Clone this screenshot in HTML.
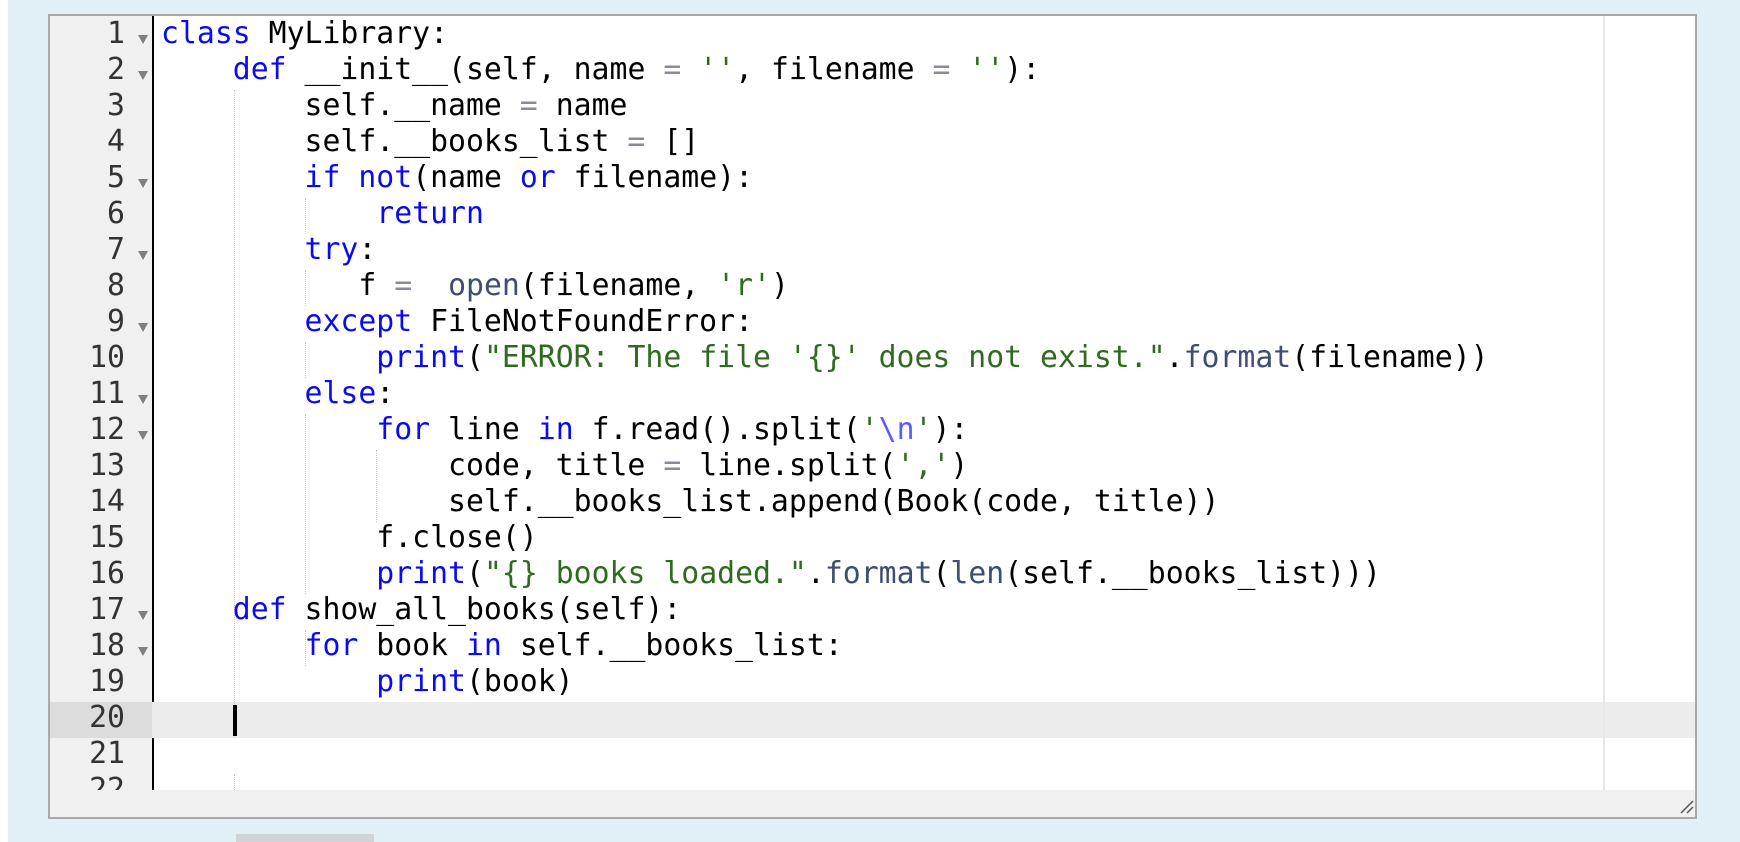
<!DOCTYPE html>
<html><head><meta charset="utf-8"><style>
html,body{margin:0;padding:0;}
body{width:1740px;height:842px;background:#e1eff7;position:relative;overflow:hidden;font-family:"DejaVu Sans Mono","Liberation Mono",monospace;}
.strip{position:absolute;left:0;top:0;width:8px;height:842px;background:#fff;}
.ed{position:absolute;left:48px;top:14px;width:1645px;height:801px;border:2px solid #a9a9a9;background:#fff;overflow:hidden;}
.gut{position:absolute;left:0;top:0;width:102px;height:774px;background:#f0f0f0;border-right:2px solid #000;}
.bot{position:absolute;left:0;top:774px;width:100%;height:40px;background:#f0f0f0;}
.pm{position:absolute;left:1553px;top:0;width:2px;height:774px;background:#e8e8e8;}
.hl{position:absolute;left:0;top:686px;width:100%;height:36px;background:#ececec;}
.hlg{position:absolute;left:0;top:686px;width:102px;height:36px;background:#dcdcdc;}
.ln{position:absolute;left:0;width:75px;text-align:right;font-size:29.8px;line-height:36px;color:#333;margin-top:-2px;}
.ar{position:absolute;left:88px;width:0;height:0;border-left:5px solid transparent;border-right:5px solid transparent;border-top:9px solid #808080;}
.cl{position:absolute;left:111px;white-space:pre;font-size:29.8px;line-height:36px;color:#000;margin-top:-2px;}
.k{color:#0b0bf0}.s{color:#2f6b1f}.b{color:#3e4d73}.o{color:#8a8a9a}.e{color:#5a5aff}
.g{position:absolute;width:0;border-left:1px dotted #c8c8c8;}
.cur{position:absolute;left:183px;top:689px;width:4px;height:31px;background:#000;}
.blk{position:absolute;left:236px;top:834px;width:138px;height:8px;background:#cfd4d8;}
</style></head><body>
<div class="strip"></div>
<div class="ed">
<div class="gut"></div>
<div class="hl"></div><div class="hlg"></div>
<div class="pm"></div>
<div class="g" style="left:184px;top:74px;height:648px"></div>
<div class="g" style="left:184px;top:758px;height:20px"></div>
<div class="g" style="left:255px;top:182px;height:36px"></div>
<div class="g" style="left:255px;top:254px;height:36px"></div>
<div class="g" style="left:255px;top:326px;height:36px"></div>
<div class="g" style="left:255px;top:398px;height:180px"></div>
<div class="g" style="left:255px;top:614px;height:36px"></div>
<div class="g" style="left:326px;top:434px;height:72px"></div>
<div class="ln" style="top:2px">1</div><div class="ar" style="top:19px"></div>
<div class="ln" style="top:38px">2</div><div class="ar" style="top:55px"></div>
<div class="ln" style="top:74px">3</div>
<div class="ln" style="top:110px">4</div>
<div class="ln" style="top:146px">5</div><div class="ar" style="top:163px"></div>
<div class="ln" style="top:182px">6</div>
<div class="ln" style="top:218px">7</div><div class="ar" style="top:235px"></div>
<div class="ln" style="top:254px">8</div>
<div class="ln" style="top:290px">9</div><div class="ar" style="top:307px"></div>
<div class="ln" style="top:326px">10</div>
<div class="ln" style="top:362px">11</div><div class="ar" style="top:379px"></div>
<div class="ln" style="top:398px">12</div><div class="ar" style="top:415px"></div>
<div class="ln" style="top:434px">13</div>
<div class="ln" style="top:470px">14</div>
<div class="ln" style="top:506px">15</div>
<div class="ln" style="top:542px">16</div>
<div class="ln" style="top:578px">17</div><div class="ar" style="top:595px"></div>
<div class="ln" style="top:614px">18</div><div class="ar" style="top:631px"></div>
<div class="ln" style="top:650px">19</div>
<div class="ln" style="top:686px">20</div>
<div class="ln" style="top:722px">21</div>
<div class="ln" style="top:758px">22</div>
<div class="cl" style="top:2px"><span class="k">class</span> MyLibrary:</div>
<div class="cl" style="top:38px">    <span class="k">def</span> __init__(self, name <span class="o">=</span> <span class="s">''</span>, filename <span class="o">=</span> <span class="s">''</span>):</div>
<div class="cl" style="top:74px">        self.__name <span class="o">=</span> name</div>
<div class="cl" style="top:110px">        self.__books_list <span class="o">=</span> []</div>
<div class="cl" style="top:146px">        <span class="k">if</span> <span class="k">not</span>(name <span class="k">or</span> filename):</div>
<div class="cl" style="top:182px">            <span class="k">return</span></div>
<div class="cl" style="top:218px">        <span class="k">try</span>:</div>
<div class="cl" style="top:254px">           f <span class="o">=</span>  <span class="b">open</span>(filename, <span class="s">'r'</span>)</div>
<div class="cl" style="top:290px">        <span class="k">except</span> FileNotFoundError:</div>
<div class="cl" style="top:326px">            <span class="k">print</span>(<span class="s">"ERROR: The file '{}' does not exist."</span>.<span class="b">format</span>(filename))</div>
<div class="cl" style="top:362px">        <span class="k">else</span>:</div>
<div class="cl" style="top:398px">            <span class="k">for</span> line <span class="k">in</span> f.read().split(<span class="s">'</span><span class="e">\n</span><span class="s">'</span>):</div>
<div class="cl" style="top:434px">                code, title <span class="o">=</span> line.split(<span class="s">','</span>)</div>
<div class="cl" style="top:470px">                self.__books_list.append(Book(code, title))</div>
<div class="cl" style="top:506px">            f.close()</div>
<div class="cl" style="top:542px">            <span class="k">print</span>(<span class="s">"{} books loaded."</span>.<span class="b">format</span>(<span class="b">len</span>(self.__books_list)))</div>
<div class="cl" style="top:578px">    <span class="k">def</span> show_all_books(self):</div>
<div class="cl" style="top:614px">        <span class="k">for</span> book <span class="k">in</span> self.__books_list:</div>
<div class="cl" style="top:650px">            <span class="k">print</span>(book)</div>
<div class="cur"></div>
<div class="bot"></div>
<svg style="position:absolute;left:1629px;top:783px" width="16" height="16"><path d="M2 14 L14 2 M8 14 L14 8" stroke="#555" stroke-width="1.5"/></svg>
</div>
<div class="blk"></div>
</body></html>
